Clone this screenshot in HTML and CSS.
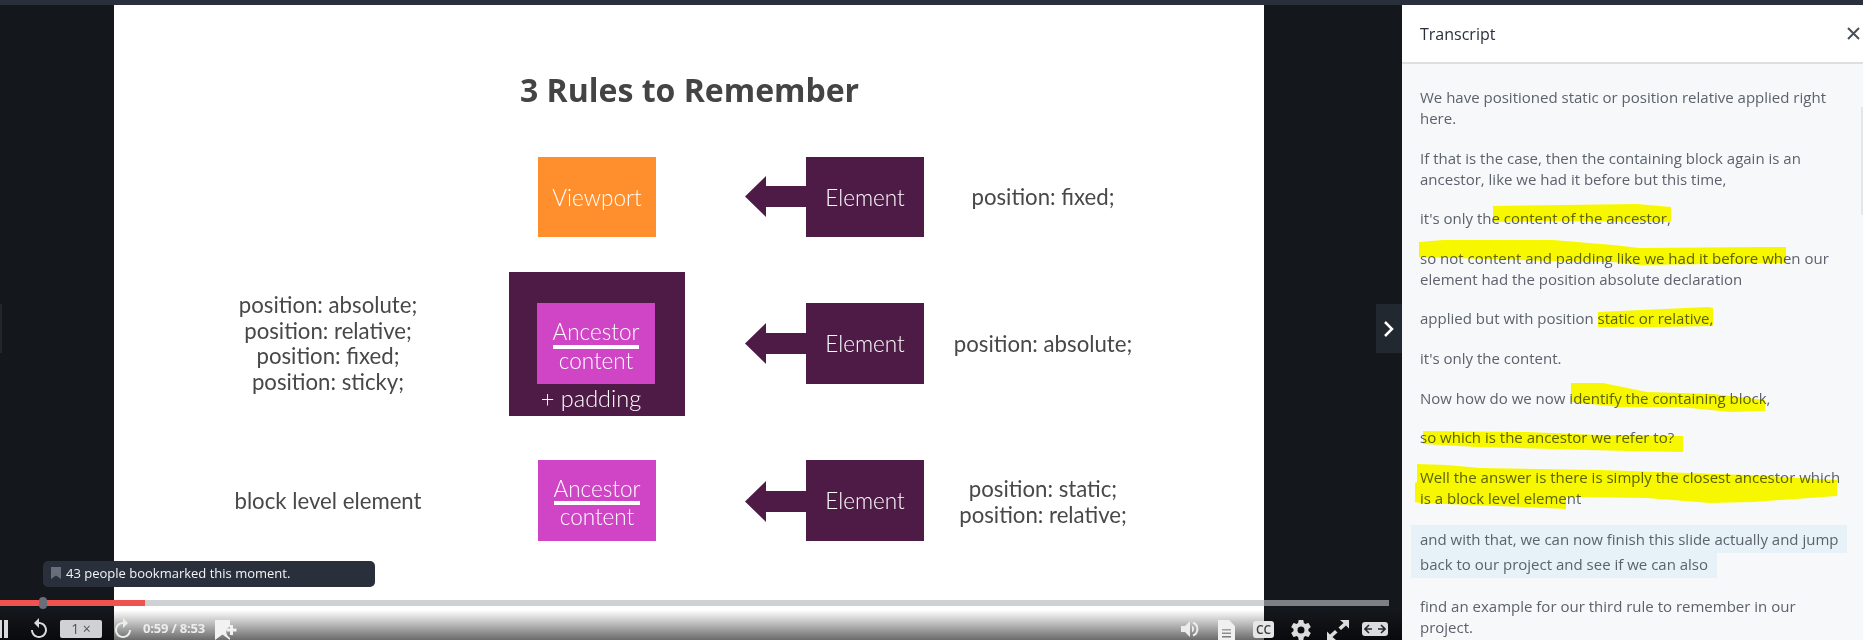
FILE: index.html
```html
<!DOCTYPE html>
<html lang="en">
<head>
<meta charset="utf-8">
<title>Transcript</title>
<link rel="stylesheet" href="styles.css">
</head>
<body>
<div class="topbar"></div>
<main class="main">
  <section class="player">
    <div class="slide">
      <h1 class="slide-title">3 Rules to Remember</h1>

      <div class="node box-orange node-viewport">Viewport</div>
      <div class="node box-purple node-el1">Element</div>
      <svg class="arrow arrow-1" viewBox="0 0 62 41"><path d="M0 20.5 21 0v10h41v21H21v10z"/></svg>
      <div class="label label-fixed">position: fixed;</div>

      <div class="label label-list">position: absolute;<br>position: relative;<br>position: fixed;<br>position: sticky;</div>
      <div class="node-outer"></div>
      <div class="node box-pink anc anc-padded node-anc2">
        <span class="anc-word">Ancestor</span><span class="anc-rule"></span><span class="anc-word">content</span>
      </div>
      <div class="node node-padding">+ padding</div>
      <div class="node box-purple node-el2">Element</div>
      <svg class="arrow arrow-2" viewBox="0 0 62 41"><path d="M0 20.5 21 0v10h41v21H21v10z"/></svg>
      <div class="label label-absolute">position: absolute;</div>

      <div class="label label-block">block level element</div>
      <div class="node box-pink anc node-anc3">
        <span class="anc-word">Ancestor</span><span class="anc-rule"></span><span class="anc-word">content</span>
      </div>
      <div class="node box-purple node-el3">Element</div>
      <svg class="arrow arrow-3" viewBox="0 0 62 41"><path d="M0 20.5 21 0v10h41v21H21v10z"/></svg>
      <div class="label label-static">position: static;<br>position: relative;</div>
    </div>

    <div class="side-tab side-tab-left"></div>
    <div class="side-tab side-tab-right">
      <svg class="chevron" viewBox="0 0 12 18"><path d="M2 2l7 7-7 7"/></svg>
    </div>

    <div class="tooltip">
      <svg class="tooltip-mark" viewBox="0 0 10 12"><path d="M0 0h10v12L5 8.6 0 12z"/></svg>
      <span>43 people bookmarked this moment.</span>
    </div>

    <div class="shade"></div>
    <div class="progress">
      <div class="progress-fill"></div>
      <div class="progress-thumb"></div>
    </div>

    <div class="controls">
      <div class="controls-left">
        <svg class="ic ic-pause" viewBox="0 0 8 18"><path d="M0 0h2v18H0zM4 0h4v18H4z"/></svg>
        <svg class="ic ic-replay" viewBox="0 0 24 24"><path d="M12 5V1L7 6l5 5V7c3.31 0 6 2.69 6 6s-2.69 6-6 6-6-2.69-6-6H4c0 4.42 3.58 8 8 8s8-3.58 8-8-3.58-8-8-8z"/></svg>
        <div class="speed">1 ×</div>
        <svg class="ic ic-forward" viewBox="0 0 24 24"><path d="M12 5V1l5 5-5 5V7c-3.31 0-6 2.69-6 6s2.69 6 6 6 6-2.69 6-6h2c0 4.42-3.58 8-8 8s-8-3.58-8-8 3.58-8 8-8z"/></svg>
        <span class="time">0:59 / 8:53</span>
        <svg class="ic ic-addmark" viewBox="0 0 22 20"><path d="M0 0h15v6.5a6 6 0 0 0-2 9.7l2 1.8V20l-7.500-5.500L0 20z"/><path d="M15 5h3v3.500h3.500v3H18V15h-3v-3.500h-3v-3h3z"/></svg>
      </div>
      <div class="controls-right">
        <svg class="ic ic-volume" viewBox="0 0 18 18"><path d="M0 6h4l5-5v16l-5-5H0z"/><path d="M11 5.500a4 4 0 0 1 0 7z"/><path class="ic-line" d="M12 2.500a7 7 0 0 1 0 13"/></svg>
        <svg class="ic ic-doc" viewBox="0 0 17 20"><path d="M0 0h11l6 6v14H0zM4 9v1.500h9V9zm0 3.500V14h9v-1.500zM4 16v1.500h9V16z" fill-rule="evenodd"/></svg>
        <div class="cc">CC</div>
        <svg class="ic ic-gear" viewBox="0 0 24 24"><path d="M19.400 13c.04-.33.06-.66.06-1s-.02-.67-.06-1l2.110-1.650c.19-.15.24-.42.12-.64l-2-3.460c-.12-.22-.39-.3-.61-.22l-2.490 1c-.52-.4-1.080-.73-1.690-.98l-.38-2.650A.49.49 0 0 0 14 2h-4c-.25 0-.46.18-.49.42l-.38 2.650c-.61.25-1.170.59-1.690.98l-2.490-1a.49.49 0 0 0-.61.22l-2 3.460c-.13.22-.07.49.12.64L4.570 11c-.04.33-.07.67-.07 1s.03.67.07 1l-2.110 1.650c-.19.15-.24.42-.12.64l2 3.460c.12.22.39.3.61.22l2.490-1c.52.4 1.080.73 1.690.98l.38 2.650c.03.24.24.42.49.42h4c.25 0 .46-.18.49-.42l.38-2.650c.61-.25 1.170-.59 1.690-.98l2.490 1c.23.09.49 0 .61-.22l2-3.460c.12-.22.07-.49-.12-.64zM12 15.500a3.500 3.500 0 1 1 0-7 3.500 3.500 0 0 1 0 7z"/></svg>
        <svg class="ic ic-expand" viewBox="0 0 22 20"><path d="M13 0h9v8.500l-3-3-5 4.500-2.500-2.500L16.500 3zM9 20H0v-8.500l3 3 5-4.500 2.500 2.500L5.500 17z"/></svg>
        <div class="wide">
          <svg class="wide-arrows" viewBox="0 0 22 10"><path d="M5 1 1 5l4 4M1 5h7M17 1l4 4-4 4M21 5h-7"/></svg>
        </div>
      </div>
    </div>
  </section>

  <aside class="sidebar">
    <header class="side-head">
      <h2 class="side-title">Transcript</h2>
      <svg class="side-close" viewBox="0 0 13 13"><path d="M1 1l11 11M12 1 1 12"/></svg>
    </header>
    <div class="side-body">
      <p class="cue">We have positioned static or position relative applied right here.</p>
      <p class="cue">If that is the case, then the containing block again is an ancestor, like we had it before but this time,</p>
      <p class="cue">it's only the content of the ancestor,</p>
      <p class="cue">so not content and padding like we had it before when our element had the position absolute declaration</p>
      <p class="cue">applied but with position static or relative,</p>
      <p class="cue">it's only the content.</p>
      <p class="cue">Now how do we now identify the containing block,</p>
      <p class="cue">so which is the ancestor we refer to?</p>
      <p class="cue">Well the answer is there is simply the closest ancestor which is a block level element</p>
      <p class="cue cue-active"><span class="cue-mark">and with that, we can now finish this slide actually and jump back to our project and see if we can also</span></p>
      <p class="cue">find an example for our third rule to remember in our project.</p>
      <svg class="ink" viewBox="0 0 461 576">
        <polygon points="91,142 235,140 269,143 269,158 150,157 91,158"/>
        <polygon points="17,178 41,176 151,176 211,181 238,184 355,183 384,183 384,199 238,201 211,198 150,197 17,193"/>
        <polygon points="196,248 306,243 311,244 311,262 255,263 196,263"/>
        <polygon points="169,319 201,319 245,328 311,330 363,336 363,347 328,348 278,343 218,343 169,338"/>
        <polygon points="21,367 125,368 198,371 281,372 281,388 225,387 75,383 21,380"/>
        <polygon points="15,400 45,401 78,404 198,406 345,411 435,416 435,432 351,438 308,439 245,434 164,433 164,445 121,443 18,439 13,438 13,419 15,418"/>
      </svg>
      <div class="scroll-thumb"></div>
    </div>
  </aside>
</main>
</body>
</html>
```

FILE: styles.css
```css
* { box-sizing: border-box; }

html, body {
  margin: 0;
  height: 640px;
  overflow: hidden;
}

body {
  display: flex;
  flex-direction: column;
  background: #14171c;
  font-family: "Open Sans", "Liberation Sans", sans-serif;
}

.topbar {
  height: 5px;
  flex: none;
  background: #29303b;
}

.main {
  flex: 1;
  display: flex;
  min-height: 0;
}

/* Player */
.player {
  position: relative;
  flex: 1;
  background: #14171c;
  overflow: hidden;
}

.slide {
  position: relative;
  width: 1150px;
  height: 100%;
  margin-left: 114px;
  background: #fff;
  font-family: "Lato", "Open Sans", sans-serif;
  color: #444;
}

.slide-title {
  position: absolute;
  left: 406px;
  top: 64px;
  margin: 0;
  font-family: "Open Sans", sans-serif;
  font-size: 32px;
  line-height: 42px;
  font-weight: 700;
  color: #444;
  white-space: nowrap;
}

.node {
  position: absolute;
  display: flex;
  align-items: center;
  justify-content: center;
  color: #fff;
  font-size: 22.500px;
  font-weight: 300;
}

.box-orange { background: #ff8f2c; }
.box-purple { background: #4e1b47; }
.box-pink { background: #cf45c5; }

.node-viewport { left: 424px; top: 152px; width: 118px; height: 80px; }
.node-el1 { left: 692px; top: 152px; width: 118px; height: 80px; }
.node-el2 { left: 692px; top: 298px; width: 118px; height: 81px; }
.node-el3 { left: 692px; top: 455px; width: 118px; height: 81px; }

.node-outer {
  position: absolute;
  left: 395px;
  top: 267px;
  width: 176px;
  height: 144px;
  background: #4e1b47;
}

.node-anc2 { left: 423px; top: 298px; width: 118px; height: 81px; }
.node-anc3 { left: 424px; top: 455px; width: 118px; height: 81px; }
.node-padding { left: 389px; top: 379px; width: 176px; height: 28px; font-size: 23.500px; }

.anc {
  flex-direction: column;
  padding-top: 5px;
}

.anc-word {
  display: block;
  line-height: 24px;
}

.anc-padded .anc-word:first-child { margin-bottom: 1px; }

.anc-rule {
  display: block;
  width: 86px;
  height: 4px;
  background: #fff;
}

.arrow {
  position: absolute;
  left: 631px;
  width: 62px;
  height: 41px;
  fill: #4e1b47;
}

.arrow-1 { top: 171px; }
.arrow-2 { top: 318px; }
.arrow-3 { top: 476px; }

.label {
  position: absolute;
  width: 260px;
  text-align: center;
  font-size: 22.200px;
  line-height: 25.700px;
  color: #484848;
}

.label-fixed { left: 799px; top: 179px; }
.label-absolute { left: 799px; top: 326px; }
.label-static { left: 799px; top: 471px; }
.label-list { left: 84px; top: 287px; }
.label-block { left: 84px; top: 483px; }

/* Side tabs */
.side-tab {
  position: absolute;
  top: 299px;
  height: 49px;
  background: #22282f;
}

.side-tab-left { left: 0; width: 2px; }

.side-tab-right {
  right: 0;
  width: 26px;
  display: flex;
  align-items: center;
  justify-content: center;
}

.chevron {
  width: 12px;
  height: 18px;
  fill: none;
  stroke: #fff;
  stroke-width: 2.500;
}

/* Tooltip */
.tooltip {
  position: absolute;
  left: 43px;
  top: 556px;
  width: 332px;
  height: 26px;
  display: flex;
  align-items: center;
  gap: 5px;
  padding: 0 0 2px 8px;
  background: #29303b;
  border-radius: 5px;
  color: #f2f3f5;
  font-size: 13px;
  white-space: nowrap;
}

.tooltip-mark {
  width: 10px;
  height: 12px;
  fill: #686f7a;
}

/* Progress */
.shade {
  position: absolute;
  left: 0;
  right: 0;
  bottom: 0;
  height: 30px;
  background: linear-gradient(to bottom, rgba(0, 0, 0, 0), rgba(0, 0, 0, .58));
}

.progress {
  position: absolute;
  left: 0;
  top: 595px;
  width: 1389px;
  height: 6px;
  background: rgba(180, 186, 190, .65);
}

.progress-fill {
  width: 145px;
  height: 100%;
  background: #ef5350;
}

.progress-thumb {
  position: absolute;
  left: 39px;
  top: -3px;
  width: 8px;
  height: 12px;
  border-radius: 4px;
  background: #686f7a;
}

/* Controls */
.controls {
  position: absolute;
  left: 0;
  right: 0;
  bottom: 0;
  height: 22px;
  display: flex;
  align-items: flex-start;
  justify-content: space-between;
  padding-right: 14px;
}

.controls-left,
.controls-right {
  display: flex;
  align-items: flex-start;
}

.ic { display: block; fill: #d8dadc; flex: none; }

.ic-pause { width: 8px; height: 18px; margin-top: 2px; }
.ic-replay { width: 24px; height: 24px; margin-left: 19px; margin-top: -1px; }
.speed {
  width: 42px;
  height: 18px;
  margin: 2px 0 0 9px;
  border-radius: 2px;
  background: #cfd1d4;
  color: #555;
  font-size: 14px;
  line-height: 18px;
  text-align: center;
}
.ic-forward { width: 24px; height: 24px; margin: -1px 0 0 9px; fill: #eceded; }
.time {
  margin-left: 8px;
  font-size: 13px;
  font-weight: 700;
  letter-spacing: -.2px;
  line-height: 20px;
  color: #ececec;
}
.ic-addmark { width: 22px; height: 20px; margin: 2px 0 0 10px; fill: #f2f2f2; }

.controls-right { gap: 0; }
.ic-volume { width: 18px; height: 18px; margin-top: 2px; fill: #ececec; }
.ic-line { fill: none; stroke: #ececec; stroke-width: 2; }
.ic-doc { width: 17px; height: 20px; margin: 2px 0 0 19px; fill: #f0f0f0; }
.cc {
  width: 21px;
  height: 17px;
  margin: 3px 0 0 18px;
  border-radius: 3px;
  background: #e6e6e6;
  color: #3a3f46;
  font-size: 12px;
  font-weight: 600;
  line-height: 17px;
  text-align: center;
}
.ic-gear { width: 24px; height: 24px; margin: 0 0 0 15px; fill: #dcdcdc; }
.ic-expand { width: 22px; height: 20px; margin: 2px 0 0 14px; fill: #dcdcdc; }
.wide {
  width: 26px;
  height: 14px;
  margin: 4px 0 0 13px;
  border-radius: 3px;
  background: #dcdcdc;
  display: flex;
  align-items: center;
  justify-content: center;
}
.wide-arrows {
  width: 22px;
  height: 10px;
  fill: none;
  stroke: #22282f;
  stroke-width: 1.600;
}

/* Sidebar */
.sidebar {
  flex: none;
  width: 461px;
  display: flex;
  flex-direction: column;
  background: #f7f8fa;
}

.side-head {
  flex: none;
  height: 59px;
  display: flex;
  align-items: center;
  justify-content: space-between;
  padding: 0 3px 0 18px;
  background: #fff;
  border-bottom: 2px solid #dedfe0;
}

.side-title {
  margin: 0;
  font-size: 16px;
  font-weight: 500;
  color: #29303b;
}

.side-close {
  width: 13px;
  height: 13px;
  fill: none;
  stroke: #4a4f57;
  stroke-width: 2;
}

.side-body {
  position: relative;
  flex: 1;
  min-height: 0;
  overflow: hidden;
  padding: 23px 18px 0;
}

.cue {
  margin: 0 0 18.600px;
  font-size: 15px;
  line-height: 21px;
  color: #5c626c;
}

.cue-active { line-height: 25px; }

.cue-mark {
  padding: 4px 9px;
  margin-left: -9px;
  background: #e6f2f8;
  -webkit-box-decoration-break: clone;
  box-decoration-break: clone;
}

.ink {
  position: absolute;
  left: 0;
  top: 0;
  width: 461px;
  height: 576px;
  fill: #ffff00;
  mix-blend-mode: multiply;
}

.scroll-thumb {
  position: absolute;
  right: 0;
  top: 43px;
  width: 2px;
  height: 108px;
  background: #e4e6e9;
}
```
